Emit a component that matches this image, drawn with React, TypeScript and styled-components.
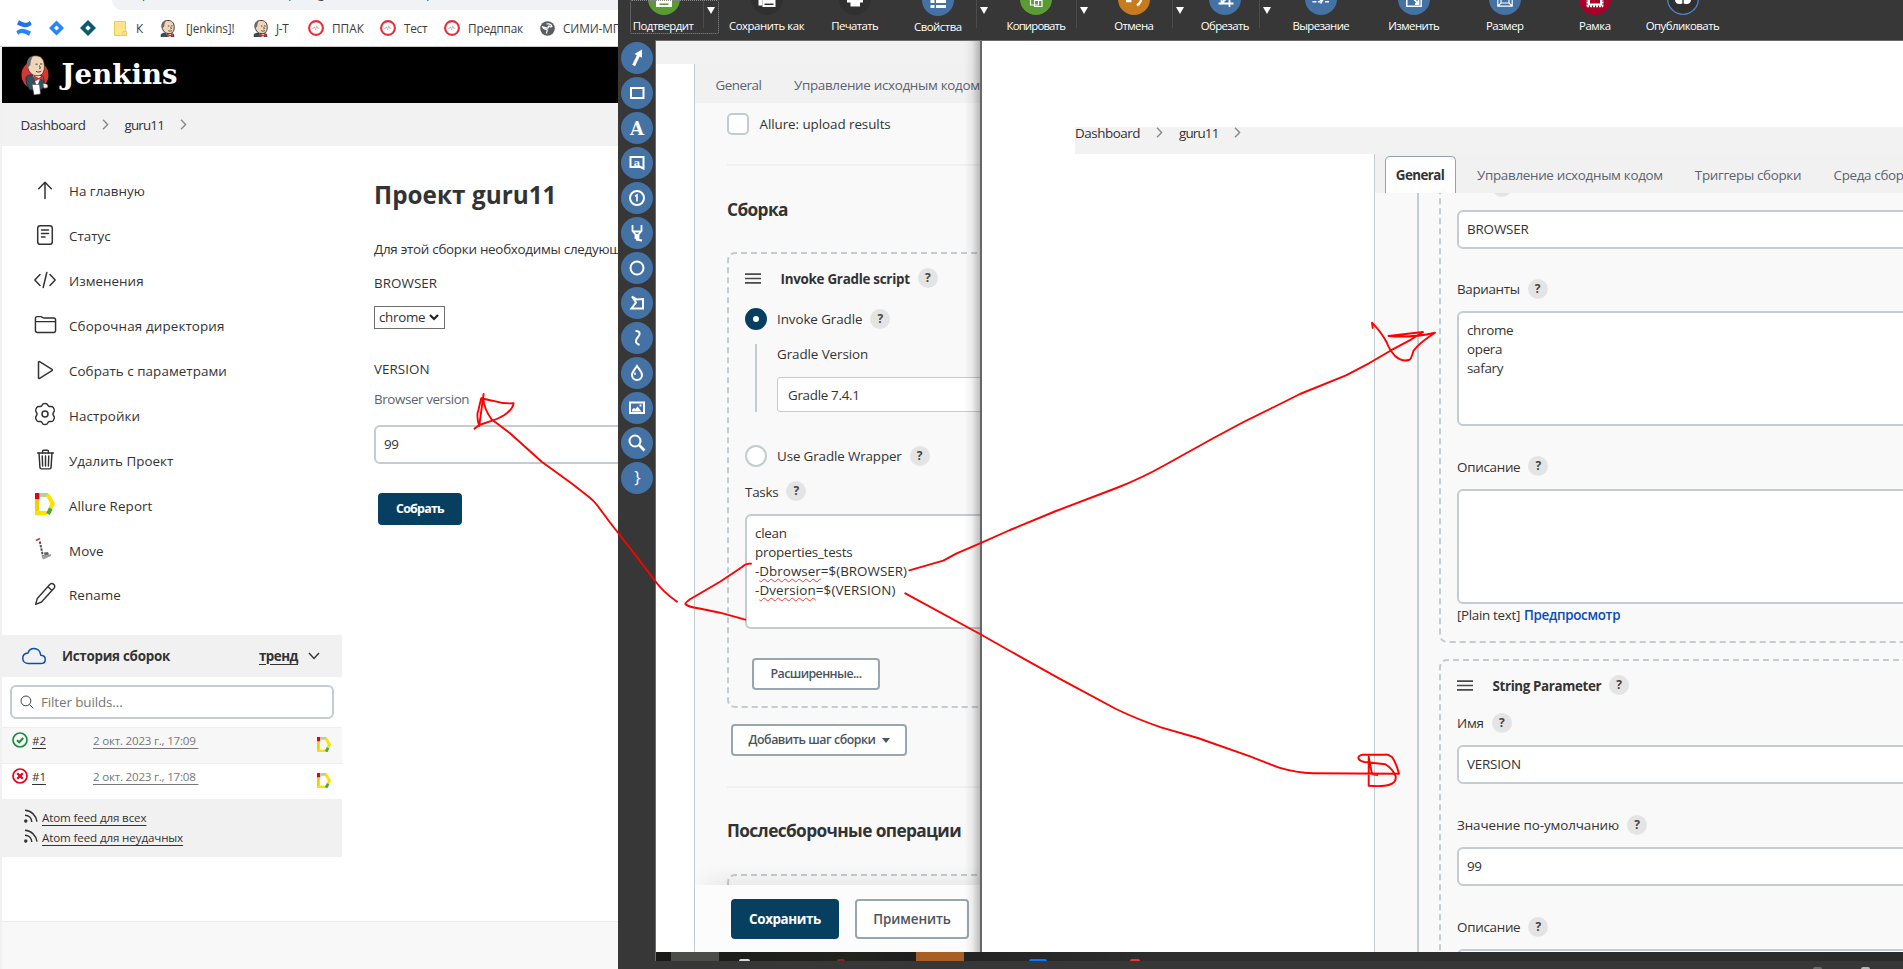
import React from "react";
import styled, { createGlobalStyle, css } from "styled-components";
import {
  IoFolderOutline,
  IoTrashOutline,
  IoCloudOutline,
  IoSearchOutline,
} from "react-icons/io5";

const line = "#c3ccd1";
const ink = "#333333";
const navy = "#073f61";
const blue = "#4472a5";

const GlobalStyle = createGlobalStyle`
  *, *::before, *::after { box-sizing: border-box; }
  body { margin: 0; overflow: hidden; font-family: "Open Sans", "Noto Sans", sans-serif; color: ${ink}; }
  svg { display: block; flex: none; }
`;

/* ---------- text ---------- */

const Text = styled.span<{ $w?: number; $s?: number; $ls?: number; $c?: string; $u?: boolean }>`
  font-size: ${(p) => p.$s ?? 13.4}px;
  font-weight: ${(p) => p.$w ?? 400};
  letter-spacing: ${(p) => p.$ls ?? -0.25}px;
  color: ${(p) => p.$c ?? ink};
  line-height: 20px;
  white-space: pre;
  ${(p) => p.$u && css`text-decoration: underline; text-underline-offset: 3px; text-decoration-thickness: 1px;`}
`;

const Line = styled.div<{ $mt?: number; $ml?: number; $gap?: number }>`
  display: flex;
  align-items: center;
  height: 20px;
  flex: none;
  gap: ${(p) => p.$gap ?? 8}px;
  margin-top: ${(p) => p.$mt ?? 0}px;
  margin-left: ${(p) => p.$ml ?? 0}px;
`;

const Heading = styled.h2<{ $mt: number; $ls?: number }>`
  margin: ${(p) => p.$mt}px 0 0;
  font-size: 17.3px;
  font-weight: 700;
  line-height: 26px;
  letter-spacing: ${(p) => p.$ls ?? -0.62}px;
  white-space: nowrap;
`;

/* ---------- frame ---------- */

const Screen = styled.div`
  position: relative;
  display: flex;
  width: 1903px;
  height: 969px;
  overflow: hidden;
  background: #fff;
`;

const BrowserPane = styled.div`
  width: 618px;
  height: 969px;
  flex: none;
  display: flex;
  flex-direction: column;
  overflow: hidden;
  background: #fff;
`;

/* ---------- browser chrome ---------- */

const AddressBar = styled.div`
  height: 10px;
  flex: none;
  margin-left: 112px;
  border-radius: 0 0 0 16px;
  background: #f0f2f5;
  overflow: hidden;
`;

const AddressText = styled.div<{ $gap?: number }>`
  display: flex;
  gap: 22px;
  margin: -14px 0 0 30px;
  font-size: 12px;
  line-height: 16px;
  color: #34394a;
  white-space: nowrap;
`;

const AddressPart = styled.span<{ $ml?: number }>`
  margin-left: ${(p) => p.$ml ?? 0}px;
`;

const Bookmarks = styled.div`
  display: flex;
  align-items: center;
  height: 37px;
  flex: none;
  padding-left: 16px;
  border-bottom: 1px solid #cfcfcf;
`;

const Bookmark = styled.div<{ $w: number }>`
  display: flex;
  align-items: center;
  flex: none;
  width: ${(p) => p.$w}px;
  height: 36px;
  color: #3c3c3c;
`;

const BookmarkLabel = styled.span<{ $ls?: number; $ml?: number }>`
  margin-left: ${(p) => p.$ml ?? 8}px;
  font-size: 11.8px;
  letter-spacing: ${(p) => p.$ls ?? -0.2}px;
  line-height: 16px;
  white-space: nowrap;
`;

/* ---------- Jenkins page ---------- */

const Page = styled.div`
  flex: 1;
  min-height: 0;
  display: flex;
  flex-direction: column;
  border-left: 2px solid #f1f1f1;
`;

const Header = styled.header`
  display: flex;
  align-items: center;
  height: 56px;
  flex: none;
  padding-left: 19px;
  background: #000;
`;

const Brand = styled.span`
  margin: -3px 0 0 12.5px;
  font-family: "DejaVu Serif", serif;
  font-weight: 700;
  font-size: 27.5px;
  letter-spacing: 0.1px;
  line-height: 36px;
  color: #fff;
`;

const Crumbs = styled.nav`
  display: flex;
  align-items: center;
  height: 43px;
  flex: none;
  padding: 1px 0 0 18.5px;
  background: #f2f2f2;
`;

const CrumbArrow = styled.span`
  display: flex;
  margin: -2px 16px 0 16px;
`;

const Body = styled.div`
  display: flex;
  height: 775px;
  flex: none;
`;

const Footer = styled.footer`
  flex: 1;
  background: #f8f8f8;
  border-top: 1px solid #ebebeb;
`;

const Sidebar = styled.aside`
  width: 340px;
  flex: none;
  padding-top: 23px;
`;

const Tasks = styled.div`
  height: 466px;
`;

const Task = styled.div`
  display: flex;
  align-items: center;
  height: 44.9px;
  padding-left: 31px;
  gap: 12px;
`;

const TaskIcon = styled.span`
  width: 24px;
  height: 24px;
  display: flex;
  align-items: center;
  justify-content: center;
  font-size: 23px;
  color: #2f2f2f;
  margin-top: -3px;
`;

const HistoryHead = styled.div`
  display: flex;
  align-items: center;
  height: 42px;
  padding: 0 22px 1px 20px;
  background: #f1f1f1;
  color: #0b4bb4;
  font-size: 24px;
`;

const HistoryTitle = styled.div`
  flex: 1;
  display: flex;
  margin-left: 16px;
`;

const ToggleArrow = styled.span`
  margin-left: 10px;
`;

const Filter = styled.div`
  display: flex;
  align-items: center;
  gap: 6px;
  height: 34px;
  margin: 8px 8px 8px;
  padding-left: 7px;
  border: 2px solid ${line};
  border-radius: 6px;
  font-size: 16px;
  color: #444;
`;

const Build = styled.div<{ $tint?: boolean }>`
  display: flex;
  align-items: flex-start;
  height: 36px;
  padding: 4px 11px 0 10px;
  border-top: 1px solid #efefef;
  background: ${(p) => (p.$tint ? "#f7f7f7" : "#fff")};
`;

const BuildNumber = styled.span`
  width: 61px;
  margin: -1px 0 0 4px;
  display: flex;
`;

const BuildDate = styled.span`
  flex: 1;
  display: flex;
  margin-top: -1px;
`;

const BuildReport = styled.span`
  padding-top: 5px;
`;

const Feeds = styled.div`
  height: 58px;
  padding: 9px 0 0 22px;
  background: #f1f1f1;
`;

const Feed = styled.div`
  display: flex;
  align-items: center;
  gap: 4px;
  height: 20px;
`;

const FeedIcon = styled.span`
  margin-top: -4px;
`;

const Main = styled.main`
  flex: 1;
  min-width: 0;
  overflow: hidden;
  padding: 33px 0 0 32px;
`;

const Title = styled.h1`
  margin: 0 0 28px;
  font-size: 24.3px;
  font-weight: 700;
  line-height: 32px;
  letter-spacing: 0.03px;
  white-space: nowrap;
`;

const NativeSelect = styled.div`
  display: flex;
  align-items: center;
  justify-content: space-between;
  width: 71px;
  height: 23px;
  margin-top: 12.5px;
  padding: 0 5px 0 4px;
  border: 1px solid #6f6f6f;
  background: #fff;
`;

const Field = styled.div<{ $mt: number; $h?: number }>`
  width: 700px;
  flex: none;
  height: ${(p) => p.$h ?? 39}px;
  margin-top: ${(p) => p.$mt}px;
  padding: ${(p) => (p.$h ? 8 : 7)}px 8px;
  border: 2px solid ${line};
  border-radius: 6px;
  background: #fff;
  display: flex;
  flex-direction: column;
`;

const AreaLine = styled(Text)`
  line-height: 19px;
  height: 19px;
`;

const Typo = styled.span`
  text-decoration: underline wavy #f33 1px;
  text-underline-offset: 2px;
`;

const Button = styled.button<{ $w: number; $h?: number; $mt?: number; $ml?: number; $primary?: boolean }>`
  display: flex;
  align-items: center;
  justify-content: center;
  gap: 6px;
  flex: none;
  width: ${(p) => p.$w}px;
  height: ${(p) => p.$h ?? 32}px;
  margin: ${(p) => p.$mt ?? 0}px 0 0 ${(p) => p.$ml ?? 0}px;
  padding: 0;
  font-family: inherit;
  border-radius: 4px;
  border: 2px solid ${(p) => (p.$primary ? navy : "#98a6b0")};
  background: ${(p) => (p.$primary ? navy : "#fff")};
`;

/* ---------- editor ---------- */

const Editor = styled.div`
  flex: 1;
  min-width: 0;
  height: 969px;
  display: flex;
  flex-direction: column;
  background: #373737;
  overflow: hidden;
`;

const Toolbar = styled.div`
  display: flex;
  height: 40px;
  flex: none;
  padding-left: 11.5px;
`;

const ToolGroup = styled.div<{ $focus?: boolean; $ml?: number }>`
  display: flex;
  flex: none;
  height: 34px;
  margin-left: ${(p) => p.$ml ?? 0}px;
  ${(p) => p.$focus && css`outline: 1px dotted #8a8a8a; outline-offset: -1px; border-radius: 2px;`}
`;

const Tool = styled.div<{ $w: number; $dy?: number }>`
  width: ${(p) => p.$w}px;
  display: flex;
  flex-direction: column;
  align-items: center;
  margin-top: ${(p) => -17 + (p.$dy ?? 0)}px;
  height: 52px;
`;

const ToolLabel = styled.span<{ $ls: number }>`
  margin: 3px 1px 0 0;
  font-size: 11.4px;
  line-height: 16px;
  letter-spacing: ${(p) => p.$ls}px;
  color: #fff;
  white-space: nowrap;
`;

const Drop = styled.div<{ $ml?: number }>`
  width: 16px;
  height: 28px;
  margin-left: ${(p) => p.$ml ?? 0}px;
  padding: 7px 0 0 3px;
  border-left: 1px solid #4c4c4c;
`;

const Workspace = styled.div`
  display: flex;
  height: 921px;
  flex: none;
`;

const Palette = styled.div`
  width: 37px;
  flex: none;
  display: flex;
  flex-direction: column;
  gap: 3px;
  padding: 2px 0 0 3px;
`;

const Canvas = styled.div`
  flex: 1;
  min-width: 0;
  display: flex;
  flex-direction: column;
  border: solid #6b6b6b;
  border-width: 1px 0 1px 1px;
`;

const Shots = styled.div`
  height: 911px;
  flex: none;
  display: flex;
  background: #fff;
`;

const LeftShot = styled.div`
  position: relative;
  width: 326px;
  flex: none;
  display: flex;
  padding-top: 23px;
  background: linear-gradient(#f2f2f2 23px, #fff 23px);
  border-right: 2px solid #666;
  overflow: hidden;
`;

const EdgeShade = styled.div`
  position: absolute;
  top: 0;
  right: 0;
  bottom: 0;
  width: 16px;
  background: linear-gradient(90deg, rgba(0, 0, 0, 0), rgba(0, 0, 0, 0.06) 50%, rgba(0, 0, 0, 0.26));
`;

const LeftConfig = styled.div`
  width: 286px;
  flex: none;
  margin-left: 38px;
  display: flex;
  flex-direction: column;
  border-left: 1px solid ${line};
  background: #f9f9f9;
`;

const TabStrip = styled.div`
  display: flex;
  height: 39px;
  flex: none;
  background: #f1f1f1;
  overflow: hidden;
`;

const Tab = styled.div<{ $ml: number; $active?: boolean }>`
  display: flex;
  align-items: center;
  flex: none;
  height: 37px;
  margin: 2px 0 0 ${(p) => p.$ml}px;
  ${(p) =>
    p.$active &&
    css`
      width: 71px;
      justify-content: center;
      background: #fff;
      border: 1px solid #93a3ad;
      border-bottom: 0;
      border-radius: 5px 5px 0 0;
      padding-right: 1px;
    `}
`;

const ConfigBody = styled.div`
  flex: 1;
  min-height: 0;
  overflow: hidden;
  padding-left: 32px;
  display: flex;
  flex-direction: column;
`;

const CheckRow = styled.div`
  display: flex;
  align-items: center;
  gap: 10.5px;
  height: 22px;
  flex: none;
  margin-top: 10px;
`;

const CheckBox = styled.span`
  width: 22px;
  height: 22px;
  border: 2px solid ${line};
  border-radius: 5px;
  background: #fff;
`;

const Rule = styled.div<{ $mt: number }>`
  height: 2px;
  flex: none;
  margin-top: ${(p) => p.$mt}px;
  background: #f0f0f0;
`;

const Chunk = styled.section<{ $mt: number; $h: number }>`
  position: relative;
  flex: none;
  width: 760px;
  height: ${(p) => p.$h}px;
  margin-top: ${(p) => p.$mt}px;
  padding: 2px 0 0 18px;
  overflow: hidden;
`;

const ChunkOutline = styled.svg`
  position: absolute;
  left: 0;
  top: 0;
`;

const RadioRow = styled(Line)`
  height: 22px;
`;

const Radio = styled.span<{ $on?: boolean }>`
  width: 22px;
  height: 22px;
  margin-right: 2px;
  border-radius: 50%;
  border: ${(p) => (p.$on ? `8px solid ${navy}` : `2px solid ${line}`)};
  background: #fff;
`;

const Nested = styled.div`
  height: 68px;
  margin: 14px 0 0 10px;
  padding-left: 20px;
  border-left: 2px solid ${line};
`;

const Dropdown = styled.div`
  display: flex;
  align-items: center;
  height: 35px;
  margin-top: 13px;
  padding-left: 10px;
  border: 1px solid ${line};
  border-radius: 3px;
  background: #fff;
`;

const HelpDot = styled.span`
  display: flex;
  align-items: center;
  justify-content: center;
  width: 20px;
  height: 20px;
  margin-top: -1px;
  border-radius: 50%;
  background: #e4e4e4;
  font-size: 12px;
  font-weight: 700;
  line-height: 20px;
  color: #444;
`;

const SaveBar = styled.div`
  position: relative;
  display: flex;
  gap: 16px;
  height: 67px;
  flex: none;
  padding: 14px 0 0 36px;
  background: #fcfcfc;
  box-shadow: 12px -4px 22px rgba(0, 0, 0, 0.09);
`;

const RightShot = styled.div`
  flex: 1;
  min-width: 0;
  display: flex;
  flex-direction: column;
  padding: 86px 0 0 94px;
`;

const RightCrumbs = styled.div`
  display: flex;
  height: 27px;
  flex: none;
  background: #f2f2f2;
  margin-left: -1px;
`;

const CrumbLine = styled.div`
  display: flex;
  align-items: center;
  height: 20px;
  margin-top: -4px;
`;

const RightConfig = styled.div`
  flex: 1;
  min-height: 0;
  margin-left: 298px;
  display: flex;
  flex-direction: column;
  border-left: 1px solid ${line};
  background: #f9f9f9;
`;

const RightBody = styled.div`
  flex: 1;
  min-height: 0;
  margin-left: 42px;
  padding-left: 20px;
  border-left: 2px solid ${line};
  overflow: hidden;
`;

const TaskStrip = styled.div`
  height: 9px;
  flex: none;
  display: flex;
  background: linear-gradient(90deg, #191a17, #22251c 16%, #1f1f1f 20%, #262626 28%, #2e2e2e 40%, #2b2b2b);
`;

const StripItem = styled.span<{ $ml: number; $c: string }>`
  width: 48px;
  margin-left: ${(p) => p.$ml}px;
  background: ${(p) => p.$c};
`;

const StripHint = styled.span<{ $ml: number; $w: number; $c: string }>`
  align-self: flex-end;
  width: ${(p) => p.$w}px;
  height: 2px;
  margin-left: ${(p) => p.$ml}px;
  border-radius: 6px 6px 0 0;
  background: ${(p) => p.$c};
`;

const StatusHints = styled.div`
  display: flex;
  align-items: flex-end;
  flex: 1;
  padding-left: 1195px;
`;

const Annotations = styled.svg`
  position: absolute;
  left: 0;
  top: 0;
  pointer-events: none;
`;

/* ---------- icons ---------- */

const Chevron = () => (
  <svg width="7" height="11" viewBox="0 0 7 11" fill="none" stroke="#8a8a8a" strokeWidth="1.4">
    <path d="M1 0.8 5.6 5.5 1 10.2" />
  </svg>
);

const AllureIcon = ({ size = 20 }: { size?: number }) => (
  <svg width={size} height={size * 1.1} viewBox="0 0 20 22" fill="none" strokeWidth="4">
    <path d="M2 5v15" stroke="#f3cf00" />
    <path d="M0 20h12" stroke="#ffe100" />
    <path d="M5 2h8" stroke="#a9d5a2" />
    <path d="M12.500 1.500L17.800 11l-2.800 5.500" stroke="#ffe100" />
    <path d="M15.800 15.500L13 21" stroke="#43a83e" />
    <path d="M0 0h4.500v6H0z" fill="#e2001a" />
  </svg>
);

const Butler = ({ w, h, disc }: { w: number; h: number; disc?: boolean }) => (
  <svg width={w} height={h} viewBox={disc ? "0 0 28 40" : "3.5 0 21 26"} preserveAspectRatio="none">
    {disc && <ellipse cx="14" cy="20" rx="13.5" ry="14" fill="#d33833" />}
    <path d="M5 22c3-2.500 6-2.500 9-1.500 4-1 6 0 8.500 2l1 8.500c-2 3-4 4-6 4H9c-3-4-4.500-8-4-13z" fill="#335061" stroke="#1b2731" strokeWidth="0.8" />
    <path d="M12 20l4 12 4-11z" fill="#fff" />
    <path d="M6.500 11C5.500 4 9 .8 14.500.7 20 .7 23 4 23.300 10c.4 6-1.300 10.500-6.300 10.800C10.500 21 7.500 17 6.500 11z" fill="#f0d6b7" stroke="#3b2f2a" strokeWidth={disc ? 0.8 : 1.4} />
    <path d="M6.500 14C4.500 9 6 3 12 1.200 10 4 9.600 7 9.300 10.500c-1.300 0-2 2-2.800 3.500z" fill="#6d6b6d" />
    <path d="M14.500 9.200h2.200M19 9h2.200M15 16.300c2 1.200 4 .8 5.400-.3M18.500 10.500l.9 2.800-1.200.4" fill="none" stroke="#3b2f2a" strokeWidth={disc ? 0.9 : 1.2} />
    <path d="M13 21l4.800 2.300L22 20.500l1 5-5-1.600-4.600 2.300z" fill="#d33833" stroke="#7d1512" strokeWidth="0.5" />
    {disc && <path d="M11 29.500h7.500l1 9.500-6.500 1z" fill="#fff" stroke="#444" strokeWidth="0.6" />}
    {disc && <path d="M22 28.500c2.500-.5 5 .6 5 2.500s-2 2.500-4.500 2z" fill="#f4e6d8" stroke="#444" strokeWidth="0.6" />}
  </svg>
);

const TargetIcon = () => (
  <svg width="16" height="16" viewBox="0 0 16 16" fill="none">
    <circle cx="8" cy="8" r="6.900" stroke="#ee2b37" strokeWidth="2.100" />
    <path d="M4.300 8.300h1.200l.9-1.500 1.100 3 1.200-4 1 2.500h1.800" stroke="#a3a8b3" strokeWidth="0.7" />
  </svg>
);

const HelpMark = () => <HelpDot>?</HelpDot>;

const Grip = () => (
  <svg width="16" height="11" viewBox="0 0 16 11" stroke="#4a4a4a" strokeWidth="1.700">
    <path d="M0 1.200h16M0 5.500h16M0 9.800h16" />
  </svg>
);

const Dashes = ({ h, w = 760 }: { h: number; w?: number }) => (
  <ChunkOutline width={w} height={h} fill="none" stroke={line} strokeWidth="2" strokeDasharray="6 4">
    <path d={`M${w} 1H9Q1 1 1 9V${h - 9}Q1 ${h - 1} 9 ${h - 1}H${w}`} />
  </ChunkOutline>
);

const DownTriangle = ({ w = 8, h = 7, c = "#fff" }: { w?: number; h?: number; c?: string }) => (
  <svg width={w} height={h} viewBox="0 0 8 7" preserveAspectRatio="none">
    <path d="M0 0h8L4 7z" fill={c} />
  </svg>
);

const sidebar: [React.ReactNode, string, number][] = [
  [<svg key="u" width="24" height="24" viewBox="0 0 24 24" fill="none" stroke="#333" strokeWidth="1.500" strokeLinecap="round" strokeLinejoin="round"><path d="M12 20.500V4.500M5.700 10.800 12 4.300l6.300 6.500" /></svg>, "На главную", 0.02],
  [<svg key="s" width="24" height="24" viewBox="0 0 24 24" fill="none" stroke="#333" strokeWidth="1.500" strokeLinecap="round"><rect x="4.700" y="2.700" width="14.600" height="18.600" rx="2.600" /><path d="M8.500 7h7M8.500 10.500h7M8.500 14h3.500" /></svg>, "Статус", 0.02],
  [<svg key="c" width="24" height="24" viewBox="0 0 24 24" fill="none" stroke="#333" strokeWidth="1.500" strokeLinecap="round" strokeLinejoin="round"><path d="M7 6.500 1.800 12 7 17.500M17 6.500 22.200 12 17 17.500M13.800 4.500l-3.600 15" /></svg>, "Изменения", 0.02],
  [<IoFolderOutline key="f" />, "Сборочная директория", 0.13],
  [<svg key="p" width="24" height="24" viewBox="0 0 24 24" fill="none" stroke="#333" strokeWidth="1.500" strokeLinejoin="round"><path d="M5.500 4.200v15.600c0 .6.600.9 1.100.600L19 12.700c.5-.3.500-1 0-1.300L6.600 3.600c-.5-.3-1.100 0-1.100.6z" /></svg>, "Собрать с параметрами", 0.06],
  [<svg key="g" width="24" height="24" viewBox="0 0 24 24" fill="none" stroke="#333" strokeWidth="1.500" strokeLinejoin="round"><circle cx="12" cy="12" r="3" /><path d="M9.300 2.900c.5-1.900 4.900-1.900 5.400 0 .4 1.400 1 1.800 2.300 1.600 1.500-.3 2.400-.2 3.200.9.700 1.100 1.500 2.500 1.100 3.600-.4.900-1.300 1.600-1.300 3s.9 2.100 1.300 3c.4 1.100-.4 2.500-1.100 3.600-.8 1.100-1.700 1.200-3.200.9-1.300-.2-1.900.2-2.300 1.600-.5 1.900-4.900 1.900-5.400 0-.4-1.400-1-1.800-2.300-1.600-1.500.3-2.400.2-3.200-.9-.7-1.100-1.500-2.500-1.100-3.600.4-.9 1.300-1.600 1.300-3s-.9-2.100-1.300-3c-.4-1.100.4-2.500 1.100-3.600.8-1.100 1.700-1.200 3.200-.9 1.300.2 1.900-.2 2.300-1.600z" /></svg>, "Настройки", 0.1],
  [<IoTrashOutline key="t" />, "Удалить Проект", 0.02],
  [<AllureIcon key="a" size={20} />, "Allure Report", 0.1],
  [<svg key="m" width="24" height="24" viewBox="0 0 24 24" fill="none"><path d="M6.800 4.500 10 19.500" stroke="#555" strokeWidth="2" strokeDasharray="2.500 1" /><path d="M3 3.500l4-2" stroke="#c33" strokeWidth="1.500" /><path d="M9 20l9-3v2l-8 3.500z" fill="#999" /><path d="M11 15.500l4-.5 1 2.500-4.500 1.500z" fill="#666" /></svg>, "Move", 0.1],
  [<svg key="r" width="24" height="24" viewBox="0 0 24 24" fill="none" stroke="#333" strokeWidth="1.400" strokeLinejoin="round"><path d="M2.600 22.400 4.300 16.500 17 2.300c2.600-2 6 1 4.200 3.700L8.500 20zM15 4.700l4 3.700" /></svg>, "Rename", 0.1],
];

const paletteIcons: React.ReactNode[] = [
  <path key="1" d="M21 7.500v8.300l-2.300-1.200L14 24.200l-2.800-1.400 4.700-9.600-2.400-1.200z" fill="#fff" stroke="none" />,
  <rect key="2" x="10" y="11" width="12.500" height="10" />,
  <text key="3" x="16" y="22.500" textAnchor="middle" fontFamily="DejaVu Serif" fontWeight="700" fontSize="18" fill="#fff" stroke="none">A</text>,
  <g key="4"><path d="M22.500 21.500l-3-1.500H9.500V10h13z" /><text x="16" y="18.500" textAnchor="middle" fontFamily="DejaVu Serif" fontWeight="700" fontSize="10" fill="#fff" stroke="none">a</text></g>,
  <g key="5"><circle cx="16" cy="16" r="7" /><path d="M14 14.200l2-1.200v6.500" strokeWidth="1.600" /></g>,
  <path key="6" d="M11.500 8v6l3 3.500v4.500M20.500 8v6l-3 3.500v4.500M12 14.500h8M15 22.500l6 1M16 17v6" strokeWidth="1.800" />,
  <circle key="7" cx="16" cy="16" r="6.500" />,
  <path key="8" d="M11 9.500l5 3 6-.5v9.500H10.500l4.500-6z" />,
  <path key="9" d="M14.500 9c5 0 5 3 2.500 6-3 3.500-3 6 1.500 8" />,
  <g key="10"><path d="M16 9c2 3.300 5 5.800 5 9a5 5 0 0 1-10 0c0-3.200 3-5.700 5-9z" /><path d="M14 18v-2.500" strokeWidth="1.500" /></g>,
  <g key="11"><rect x="9" y="10.500" width="14" height="10.500" /><path d="M11 19.500v-2l2-1.500 1.500 1 2-2.500 4 5z" fill="#fff" stroke="none" /><rect x="18.500" y="12.500" width="2" height="2" fill="#fff" stroke="none" /></g>,
  <g key="12"><circle cx="14" cy="14" r="5.500" /><path d="M18 18l5.500 5.500" strokeWidth="2.600" /></g>,
  <text key="13" x="16.500" y="21" textAnchor="middle" fontFamily="Open Sans" fontSize="17" fill="#fff" stroke="none">{"}"}</text>,
];

const Disc = ({ fill, ring, children }: { fill: string; ring?: boolean; children: React.ReactNode }) => (
  <svg width="32" height="32" viewBox="0 0 32 32" fill="none" stroke="#fff" strokeWidth="1.500">
    <circle cx="16" cy="16" r={ring ? 15.3 : 16} fill={fill} stroke={ring ? "#4a86c4" : "none"} strokeWidth="1.300" />
    {children}
  </svg>
);

type ToolDef = { label: string; w: number; ls: number; ml?: number; drop?: boolean; dy?: number; focus?: boolean; icon: React.ReactNode };

const tools: ToolDef[] = [
  { label: "Подтвердит", w: 68, ls: -0.56, drop: true, focus: true, icon: <Disc fill="#5b9b33"><path d="M8 8h16v16H8z" fill="#fff" stroke="none" /><path d="M11.500 21.200h9" stroke="#5b9b33" /></Disc> },
  { label: "Сохранить как", w: 97, ls: -0.44, icon: <Disc fill="#303030"><path d="M7.500 12h4v10.500h-4z" fill="#fff" stroke="none" /><path d="M11.500 8h13v16h-13z" fill="#fff" stroke="none" /><path d="M13.500 21.300h9" stroke="#303030" /></Disc> },
  { label: "Печатать", w: 79.4, ls: -0.62, icon: <Disc fill="#303030"><path d="M8 10h16v9.500H8zM11.500 12h9.500v11.500h-9.500z" fill="#fff" stroke="none" /></Disc> },
  { label: "Свойства", w: 76, ls: -0.5, ml: 5.4, dy: 1, drop: true, icon: <Disc fill={blue}><path d="M8.500 11h4v3h-4zM14 11h10v3H14zM8.500 16h4v3h-4zM14 16h10v3H14zM8.500 21h4v3h-4zM14 21h10v3H14z" fill="#fff" stroke="none" /></Disc> },
  { label: "Копировать", w: 80, ls: -0.84, ml: 4, drop: true, icon: <Disc fill="#5b9b33"><path d="M10.500 10h8v12h-8zM14.500 17.500h7.500v6h-7.500z" strokeWidth="1.200" /></Disc> },
  { label: "Отмена", w: 76, ls: -0.55, ml: 4, drop: true, icon: <Disc fill="#c77b1e"><path d="M8 18.200h5.500M19 10c6 4 5 9 0 12.500" strokeWidth="2.200" /></Disc> },
  { label: "Обрезать", w: 67, ls: -0.6, ml: 3.5, drop: true, icon: <Disc fill={blue}><path d="M9.500 20.500h15M20.500 12v12M12.500 10v10l8-7" strokeWidth="1.800" /></Disc> },
  { label: "Вырезание", w: 93, ls: -0.6, icon: <Disc fill={blue}><path d="M7.500 18.800h4M13 18.800h2M20 18.800h4M15.500 20.500l2.500-4M15 16.500l2 3" /></Disc> },
  { label: "Изменить", w: 93, ls: -0.55, icon: <Disc fill={blue}><path d="M8.800 9h14.400v14.200H8.800z" /><path d="M13 13l7 7.500M20.500 17v4H17" strokeWidth="1.800" /></Disc> },
  { label: "Размер", w: 89, ls: -0.45, icon: <Disc fill={blue}><path d="M8.800 9h14.400v14.200H8.800zM12 12h8v8h-8zM9 23l3-3M23 23l-3-3" strokeWidth="1.200" /></Disc> },
  { label: "Рамка", w: 91, ls: -0.45, icon: <Disc fill="#a80028"><path d="M8.500 23.500V9h15v14.500" strokeWidth="2" strokeDasharray="2 1" /><path d="M10 9v12.500h12V9" strokeWidth="2" /><path d="M8 23.200h16" strokeWidth="2" strokeDasharray="2 1" /></Disc> },
  { label: "Опубликовать", w: 84.4, ls: -0.54, icon: <Disc fill="#303030" ring><path d="M8 17c0-4 3-5 7.300-5v8.500c-4 1.200-7 .5-7.300-3.500zM24 17c0-4-3-5-7.300-5v8.500c4 1.200 7 .5 7.300-3.500z" fill="#fff" stroke="none" /></Disc> },
];

/* ---------- sections ---------- */

const BookmarkStrip = () => (
  <Bookmarks>
    <Bookmark $w={33}>
      <svg width="16" height="16" viewBox="0 0 16 16"><path d="M.3 11.500 2.200 14.800c3-2.700 4.600-2.200 10.900 1l1.900-4.200C8 8 4 7.500.3 11.500z" fill="#2684ff" /><path d="M15.700 4.300 13.800 1C10.800 3.700 9.200 3.300 2.900.2L1 4.400c7 3.600 11 4 14.700-.1z" fill="#1f73ee" /></svg>
    </Bookmark>
    <Bookmark $w={31}>
      <svg width="15" height="16" viewBox="0 0 16 16"><path d="M8 0l8 8-8 8-8-8zM8 5.300 5.300 8 8 10.700 10.700 8z" fill="#2684ff" fillRule="evenodd" /></svg>
    </Bookmark>
    <Bookmark $w={34}>
      <svg width="16" height="16" viewBox="0 0 16 16"><path d="M8 0l8 8-8 8-8-8zM8 5.300 5.300 8 8 10.700 10.700 8z" fill="#0b5a72" fillRule="evenodd" /></svg>
    </Bookmark>
    <Bookmark $w={46}>
      <svg width="13" height="15" viewBox="0 0 13 15"><path d="M.5.5h11v14H.5z" fill="#ffe48c" stroke="#edcb55" /><path d="M9 10.500h3.500v4H9z" fill="#ffe48c" stroke="#edcb55" /></svg>
      <BookmarkLabel $ml={9}>К</BookmarkLabel>
    </Bookmark>
    <Bookmark $w={93}>
      <Butler w={15} h={17} />
      <BookmarkLabel $ml={11} $ls={-0.15}>[Jenkins]!</BookmarkLabel>
    </Bookmark>
    <Bookmark $w={55}>
      <Butler w={15} h={17} />
      <BookmarkLabel $ml={8} $ls={-0.4}>J-T</BookmarkLabel>
    </Bookmark>
    <Bookmark $w={72}><TargetIcon /><BookmarkLabel $ls={0}>ППАК</BookmarkLabel></Bookmark>
    <Bookmark $w={64}><TargetIcon /><BookmarkLabel $ls={-0.25}>Тест</BookmarkLabel></Bookmark>
    <Bookmark $w={96}><TargetIcon /><BookmarkLabel>Предппак</BookmarkLabel></Bookmark>
    <Bookmark $w={90}>
      <svg width="15" height="15" viewBox="0 0 16 16"><circle cx="8" cy="8" r="7.800" fill="#5a5d61" /><path d="M7 3.300c2-1 5 .3 5.700 2.500-1.500 1.700-2.500-.8-3.500-.5-1.300.5.300 1.700-.8 2.300-1 .5-3-.6-5.700-1.500.3 2.300 3 2.600 4.800 3.200 1 1.200-.8 2.200-.6 4" fill="none" stroke="#fff" strokeWidth="1.300" /></svg>
      <BookmarkLabel $ls={-0.1}>СИМИ-МГМ</BookmarkLabel>
    </Bookmark>
  </Bookmarks>
);

const BuildHistory = () => (
  <>
    <HistoryHead>
      <IoCloudOutline />
      <HistoryTitle><Text $w={700} $ls={-0.27}>История сборок</Text></HistoryTitle>
      <Text $w={700} $ls={-0.5} $u>тренд</Text>
      <ToggleArrow>
        <svg width="12" height="8" viewBox="0 0 12 8" fill="none" stroke="#333" strokeWidth="1.400"><path d="M1 1l5 5.500L11 1" /></svg>
      </ToggleArrow>
    </HistoryHead>
    <Filter>
      <IoSearchOutline />
      <Text $c="#777" $ls={-0.1}>Filter builds...</Text>
    </Filter>
    <Build $tint>
      <svg width="16" height="16" viewBox="0 0 16 16" fill="none" stroke="#1b8f3e" strokeWidth="1.700"><circle cx="8" cy="8" r="7" /><path d="M5 8.200l2.200 2.100L11.200 6" strokeWidth="2" /></svg>
      <BuildNumber><Text $s={11.6} $ls={-0.1} $u>#2</Text></BuildNumber>
      <BuildDate><Text $s={11.6} $ls={-0.22} $c="#777" $u>{"2 окт. 2023 г., 17:09 "}</Text></BuildDate>
      <BuildReport><AllureIcon size={14} /></BuildReport>
    </Build>
    <Build>
      <svg width="16" height="16" viewBox="0 0 16 16" fill="none" stroke="#e6001f" strokeWidth="1.700"><circle cx="8" cy="8" r="7" /><path d="M5.200 5.200l5.600 5.600M10.800 5.200l-5.600 5.600" strokeWidth="2.200" /></svg>
      <BuildNumber><Text $s={11.6} $ls={-0.1} $u>#1</Text></BuildNumber>
      <BuildDate><Text $s={11.6} $ls={-0.22} $c="#777" $u>{"2 окт. 2023 г., 17:08 "}</Text></BuildDate>
      <BuildReport><AllureIcon size={14} /></BuildReport>
    </Build>
    <Feeds>
      {["Atom feed для всех", "Atom feed для неудачных"].map((t) => (
        <Feed key={t}>
          <FeedIcon>
            <svg width="14" height="14" viewBox="0 0 14 14" fill="none" stroke="#333" strokeWidth="1.400"><circle cx="1.800" cy="12" r="1" fill="#333" /><path d="M1 6.200c3.800 0 6.500 2.800 6.800 6.800M1 1.200c6 .3 11 5 12 11.500" /></svg>
          </FeedIcon>
          <Text $s={11.6} $w={500} $ls={-0.13} $u>{t}</Text>
        </Feed>
      ))}
    </Feeds>
  </>
);

const JenkinsPage = () => (
  <Page>
    <Header>
      <Butler w={28} h={40} disc />
      <Brand>Jenkins</Brand>
    </Header>
    <Crumbs>
      <Text $w={500} $ls={-0.45}>Dashboard</Text>
      <CrumbArrow><Chevron /></CrumbArrow>
      <Text $w={500} $ls={-0.85}>guru11</Text>
      <CrumbArrow><Chevron /></CrumbArrow>
    </Crumbs>
    <Body>
      <Sidebar>
        <Tasks>
          {sidebar.map(([icon, label, ls]) => (
            <Task key={label}>
              <TaskIcon>{icon}</TaskIcon>
              <Text $w={500} $ls={ls}>{label}</Text>
            </Task>
          ))}
        </Tasks>
        <BuildHistory />
      </Sidebar>
      <Main>
        <Title>Проект guru11</Title>
        <Line><Text $ls={-0.27}>Для этой сборки необходимы следующие</Text></Line>
        <Line $mt={14}><Text $w={500} $ls={0.05}>BROWSER</Text></Line>
        <NativeSelect>
          <Text $ls={-0.3}>chrome</Text>
          <svg width="10" height="7" viewBox="0 0 10 7" fill="none" stroke="#222" strokeWidth="2.200"><path d="M1 1l4 4 4-4" /></svg>
        </NativeSelect>
        <Line $mt={30.500}><Text $w={500} $ls={0.05}>VERSION</Text></Line>
        <Line $mt={10}><Text $c="#5c6370" $ls={-0.4}>Browser version</Text></Line>
        <Field $mt={16}><Text $ls={-0.3}>99</Text></Field>
        <Button $w={84} $mt={29} $ml={4} $primary><Text $w={700} $s={12.4} $ls={-0.72} $c="#fff">Собрать</Text></Button>
      </Main>
    </Body>
    <Footer />
  </Page>
);

const EditorToolbar = () => (
  <Toolbar>
    {tools.map((t) => (
      <ToolGroup key={t.label} $focus={t.focus} $ml={t.ml}>
        <Tool $w={t.w} $dy={t.dy}>
          {t.icon}
          <ToolLabel $ls={t.ls}>{t.label}</ToolLabel>
        </Tool>
        {t.drop && <Drop $ml={t.focus ? 5 : 0}><DownTriangle /></Drop>}
      </ToolGroup>
    ))}
  </Toolbar>
);

const BuildConfig = () => (
  <LeftShot>
    <LeftConfig>
      <TabStrip>
        <Tab $ml={20.500}><Text $c="#5c6370" $ls={-0.48}>General</Text></Tab>
        <Tab $ml={32.500}><Text $c="#5c6370" $ls={-0.3}>Управление исходным кодом</Text></Tab>
      </TabStrip>
      <ConfigBody>
        <CheckRow><CheckBox /><Text $w={500} $ls={-0.06}>Allure: upload results</Text></CheckRow>
        <Rule $mt={29} />
        <Heading $mt={30.500}>Сборка</Heading>
        <Chunk $mt={29.500} $h={456}>
          <Dashes h={456} />
          <Line $mt={14.500} $gap={19.500}><Grip /><Line><Text $w={700} $ls={-0.27}>Invoke Gradle script</Text><HelpMark /></Line></Line>
          <RadioRow $mt={19.500}><Radio $on /><Text $w={500} $ls={-0.08}>Invoke Gradle</Text><HelpMark /></RadioRow>
          <Nested>
            <Line><Text $w={500} $ls={-0.08}>Gradle Version</Text></Line>
            <Dropdown><Text $ls={-0.3}>Gradle 7.4.1</Text></Dropdown>
          </Nested>
          <RadioRow $mt={33}><Radio /><Text $w={500} $ls={-0.13}>Use Gradle Wrapper</Text><HelpMark /></RadioRow>
          <Line $mt={14.500}><Text $w={500} $ls={-0.25}>Tasks</Text><HelpMark /></Line>
          <Field $mt={12.500} $h={115}>
            <AreaLine>clean</AreaLine>
            <AreaLine $ls={-0.2}>properties_tests</AreaLine>
            <AreaLine $ls={0.03}>-<Typo>Dbrowser</Typo>=$(BROWSER)</AreaLine>
            <AreaLine $ls={0.12}>-<Typo>Dversion</Typo>=$(VERSION)</AreaLine>
          </Field>
          <Button $w={128} $mt={29} $ml={7}><Text $w={600} $s={12.4} $ls={-0.58} $c="#4a5560">Расширенные...</Text></Button>
        </Chunk>
        <Button $w={176} $mt={16} $ml={4}>
          <Text $w={600} $s={12.4} $ls={-0.48} $c="#4a5560">Добавить шаг сборки</Text>
          <DownTriangle h={5} c="#4a5560" />
        </Button>
        <Rule $mt={30} />
        <Heading $mt={30}>Послесборочные операции</Heading>
        <Chunk $mt={30} $h={200}><Dashes h={200} /></Chunk>
      </ConfigBody>
      <SaveBar>
        <Button $w={108} $h={40} $primary><Text $w={700} $ls={-0.38} $c="#fff">Сохранить</Text></Button>
        <Button $w={114} $h={40}><Text $w={600} $ls={-0.1} $c="#4a5560">Применить</Text></Button>
      </SaveBar>
    </LeftConfig>
    <EdgeShade />
  </LeftShot>
);

const ParameterConfig = () => (
  <RightShot>
    <RightCrumbs>
      <CrumbLine>
        <Text $w={500} $ls={-0.45}>Dashboard</Text>
        <CrumbArrow><Chevron /></CrumbArrow>
        <Text $w={500} $ls={-0.85}>guru11</Text>
        <CrumbArrow><Chevron /></CrumbArrow>
      </CrumbLine>
    </RightCrumbs>
    <RightConfig>
      <TabStrip>
        <Tab $ml={10} $active><Text $w={700} $ls={-0.6}>General</Text></Tab>
        <Tab $ml={21}><Text $c="#5c6370" $ls={-0.3}>Управление исходным кодом</Text></Tab>
        <Tab $ml={32}><Text $c="#5c6370" $ls={-0.33}>Триггеры сборки</Text></Tab>
        <Tab $ml={32.500}><Text $c="#5c6370" $ls={-0.33}>Среда сборки</Text></Tab>
      </TabStrip>
      <RightBody>
        <Chunk $mt={-20} $h={470}>
          <Dashes h={470} />
          <Line $mt={2} $ml={35}><HelpDot /></Line>
          <Field $mt={13}><Text $ls={-0.15}>BROWSER</Text></Field>
          <Line $mt={30}><Text $w={500} $ls={-0.33}>Варианты</Text><HelpMark /></Line>
          <Field $mt={12} $h={115}>
            <AreaLine $ls={-0.3}>chrome</AreaLine>
            <AreaLine $ls={-0.3}>opera</AreaLine>
            <AreaLine $ls={-0.3}>safary</AreaLine>
          </Field>
          <Line $mt={30.500}><Text $w={500} $ls={-0.28}>Описание</Text><HelpMark /></Line>
          <Field $mt={12.500} $h={115} />
          <Line $mt={1} $gap={4}><Text $ls={-0.32}>[Plain text]</Text><Text $w={600} $ls={-0.3} $c="#0b4bb4">Предпросмотр</Text></Line>
        </Chunk>
        <Chunk $mt={16} $h={500}>
          <Dashes h={500} />
          <Line $mt={14.500} $gap={19.500}><Grip /><Line><Text $w={700} $ls={-0.38}>String Parameter</Text><HelpMark /></Line></Line>
          <Line $mt={17.500}><Text $w={500} $ls={-0.2}>Имя</Text><HelpMark /></Line>
          <Field $mt={12}><Text $ls={-0.2}>VERSION</Text></Field>
          <Line $mt={31}><Text $w={500} $ls={-0.09}>Значение по-умолчанию</Text><HelpMark /></Line>
          <Field $mt={12}><Text $ls={-0.3}>99</Text></Field>
          <Line $mt={31}><Text $w={500} $ls={-0.28}>Описание</Text><HelpMark /></Line>
          <Field $mt={12} $h={115} />
        </Chunk>
      </RightBody>
    </RightConfig>
  </RightShot>
);

export default function App() {
  return (
    <>
      <GlobalStyle />
      <Screen>
        <BrowserPane>
          <AddressBar>
            <AddressText>
              <AddressPart>p</AddressPart>
              <AddressPart $ml={117}>p</AddressPart>
              <AddressPart>g</AddressPart>
              <AddressPart $ml={80}>p</AddressPart>
            </AddressText>
          </AddressBar>
          <BookmarkStrip />
          <JenkinsPage />
        </BrowserPane>
        <Editor>
          <EditorToolbar />
          <Workspace>
            <Palette>
              {paletteIcons.map((icon, i) => (
                <svg key={i} width="32" height="32" viewBox="0 0 32 32" fill="none" stroke="#fff" strokeWidth="2">
                  <circle cx="16" cy="16" r="16" fill={blue} stroke="none" />
                  {icon}
                </svg>
              ))}
            </Palette>
            <Canvas>
              <Shots>
                <BuildConfig />
                <ParameterConfig />
              </Shots>
              <TaskStrip>
                <StripItem $ml={15} $c="#4b4d49" />
                <StripHint $ml={20} $w={11} $c="#d8d8d8" />
                <StripHint $ml={87} $w={8} $c="#7a2a2a" />
                <StripItem $ml={71} $c="#a75f26" />
                <StripHint $ml={65} $w={18} $c="#0a78f5" />
                <StripHint $ml={83} $w={10} $c="#e04030" />
              </TaskStrip>
            </Canvas>
          </Workspace>
          <StatusHints>
            <StripHint $ml={0} $w={9} $c="#6b6b6b" />
            <StripHint $ml={39} $w={9} $c="#b5b5b5" />
          </StatusHints>
        </Editor>
        <Annotations width="1903" height="969" viewBox="0 0 1903 969" fill="none" stroke="#ff0000" strokeWidth="1.900" strokeLinejoin="round" strokeLinecap="round">
          <path d="M677 601.700C669 596 661 589 655.700 581.700L636.700 556.700 610 522.500 597 505Q594 501 589 497L571.400 483.300 541.700 461.700 510 433.300 491.500 419.300Q484 409 483.200 398" />
          <path d="M483.600 394L479.200 426Q476 416 478.400 410L481.200 398.300 492.300 400.700Q503 404 513.600 403.300 513 409 504 415.300 498 419 492.300 420.700L479.200 425 474.500 428.700" />
          <path d="M751 563.700Q746 563 742 567L735 571.700 720 581.700 690 599.300Q685 603 685.300 604 688 607 698.300 608.300L720 612.700 745.300 619.700" />
          <path d="M909.300 570.300L943.300 560.700Q950 557 956.700 553.300L980 543.300 1010 530 1056 511 1116.500 488Q1142 478 1165 465L1213.600 438Q1244 421 1274 407L1300 394 1346 375.300 1369 363.300 1390.400 350.700 1411.500 339.300 1423 332 1388.500 336Q1412 338 1435 332.700 1419 343 1413.500 350.700 1411 360 1408.800 360 1402 362 1395 356 1389 349 1387 343 1382 333 1372 322.700L1372.700 328" />
          <path d="M905.300 593.300L980 634 1010 651 1059 678.300 1116 709Q1139 720 1161 727.300L1197.800 738 1250 756.300 1279 767.700Q1297 773 1312.500 773.300L1399 773.700Q1396 762 1391.600 756.700 1387 754 1385.400 754.700H1362.500Q1358 756 1358.300 758 1359 761 1364.500 762L1385.400 764.300Q1393 769 1395.800 776.700 1396 783 1390 784.500 1383 787 1368.700 785.700V756.700L1372 774.300 1377.400 775" />
        </Annotations>
      </Screen>
    </>
  );
}
